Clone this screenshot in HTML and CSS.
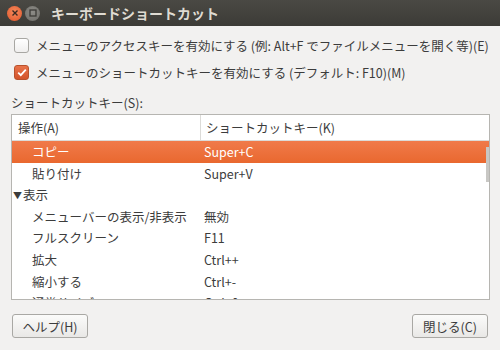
FILE: index.html
```html
<!DOCTYPE html>
<html lang="ja">
<head>
    <meta charset="UTF-8">
    <title>キーボードショートカット</title>
    <link rel="stylesheet" href="styles.css">
</head>
<body>
    <div class="window">
        <header class="titlebar">
            <span class="btn-close">
                <svg width="8" height="8" viewBox="0 0 8 8"><path d="M1.5 1.5 L6.5 6.5 M6.5 1.5 L1.5 6.5" stroke="#3a2a22" stroke-width="1.4"/></svg>
            </span>
            <span class="btn-max">
                <svg width="8" height="8" viewBox="0 0 8 8"><rect x="1" y="1" width="6" height="6" fill="none" stroke="#3c3b37" stroke-width="1.3"/></svg>
            </span>
            <span class="title">キーボードショートカット</span>
        </header>

        <div class="content">
            <label class="check">
                <span class="box"></span>
                メニューのアクセスキーを有効にする (例: Alt+F でファイルメニューを開く等)(E)
            </label>
            <label class="check">
                <span class="box checked">
                    <svg width="10" height="9" viewBox="0 0 10 9"><path d="M1.2 4.6 L3.8 7.2 L8.8 1.6" fill="none" stroke="#fff" stroke-width="1.8"/></svg>
                </span>
                メニューのショートカットキーを有効にする (デフォルト: F10)(M)
            </label>

            <div class="section-label">ショートカットキー(S):</div>

            <div class="tree">
                <div class="tree-head">
                    <div class="col-a">操作(A)</div>
                    <div class="col-k">ショートカットキー(K)</div>
                </div>
                <div class="tree-body">
                    <div class="row selected"><div class="col-a child">コピー</div><div class="col-k">Super+C</div></div>
                    <div class="row"><div class="col-a child">貼り付け</div><div class="col-k">Super+V</div></div>
                    <div class="row"><div class="col-a group"><span class="arrow">▼</span>表示</div><div class="col-k"></div></div>
                    <div class="row"><div class="col-a child">メニューバーの表示/非表示</div><div class="col-k">無効</div></div>
                    <div class="row"><div class="col-a child">フルスクリーン</div><div class="col-k">F11</div></div>
                    <div class="row"><div class="col-a child">拡大</div><div class="col-k">Ctrl++</div></div>
                    <div class="row"><div class="col-a child">縮小する</div><div class="col-k">Ctrl+-</div></div>
                    <div class="row"><div class="col-a child">通常サイズ</div><div class="col-k">Ctrl+0</div></div>
                    <div class="scrollbar"></div>
                </div>
            </div>

            <div class="actions">
                <button>ヘルプ(H)</button>
                <button>閉じる(C)</button>
            </div>
        </div>
    </div>
</body>
</html>
```

FILE: styles.css
```css
body {
    margin: 0;
    font-family: "Noto Sans CJK JP", "Noto Sans", sans-serif;
    font-size: 12.5px;
    color: #3c3c3c;
    background-color: #f2f1f0;
}

.window {
    width: 500px;
    height: 350px;
    overflow: hidden;
}

.titlebar {
    height: 26px;
    background: linear-gradient(#4a4944, #3c3b37);
    display: flex;
    align-items: center;
    padding-left: 7px;
}

.btn-close,
.btn-max {
    width: 15px;
    height: 15px;
    border-radius: 50%;
    display: flex;
    align-items: center;
    justify-content: center;
    margin-right: 3px;
}

.btn-close {
    background: radial-gradient(circle at 50% 40%, #f58a5c, #e0552a);
}

.btn-max {
    background: radial-gradient(circle at 50% 40%, #8d8c87, #6e6d68);
}

.title {
    margin-left: 8px;
    color: #dfdbd2;
    font-size: 14px;
    font-weight: bold;
}

.content {
    padding: 6px 11px 0 11px;
}

.check {
    display: flex;
    align-items: center;
    height: 27px;
    padding-left: 3px;
    white-space: nowrap;
}

.box {
    width: 13px;
    height: 13px;
    border: 1px solid #a8a7a3;
    border-radius: 3px;
    background: linear-gradient(#ffffff, #f0efee);
    margin-right: 7px;
    display: flex;
    align-items: center;
    justify-content: center;
    flex-shrink: 0;
}

.box.checked {
    background: linear-gradient(#e8734a, #d3532a);
    border-color: #b8512c;
}

.section-label {
    margin-top: 7px;
    height: 20px;
    line-height: 20px;
}

.tree {
    border: 1px solid #b6b5b1;
    background-color: #fff;
    height: 184px;
    margin-top: 1px;
    overflow: hidden;
    width: 477px;
}

.tree-head {
    display: flex;
    height: 25px;
    line-height: 25px;
    border-bottom: 1px solid #dcdbd8;
}

.tree-head .col-a {
    width: 182px;
    padding-left: 6px;
    border-right: 1px solid #dcdbd8;
}

.tree-head .col-k {
    padding-left: 5px;
}

.tree-body {
    position: relative;
}

.row {
    display: flex;
    height: 21.6px;
    line-height: 21.6px;
}

.row .col-a {
    width: 192px;
    white-space: nowrap;
}

.col-a.child {
    padding-left: 20px;
    width: 172px;
}

.col-a.group {
    padding-left: 1px;
    width: 191px;
}

.arrow {
    font-size: 9px;
    margin-right: 1px;
    position: relative;
    top: -1px;
}

.row.selected {
    background: linear-gradient(#f07a4a, #e9682f);
    color: #fff;
}

.scrollbar {
    position: absolute;
    right: 0;
    top: 6px;
    width: 3px;
    height: 35px;
    background-color: #c8c7c4;
}

.actions {
    display: flex;
    justify-content: space-between;
    margin-top: 14px;
    padding: 0 1px;
}

button {
    font-family: inherit;
    font-size: 12.5px;
    color: #3c3c3c;
    width: 76px;
    height: 24px;
    border: 1px solid #a9a8a4;
    border-radius: 3px;
    background: linear-gradient(#fbfbfa, #e9e8e6);
    padding: 0;
}
```
